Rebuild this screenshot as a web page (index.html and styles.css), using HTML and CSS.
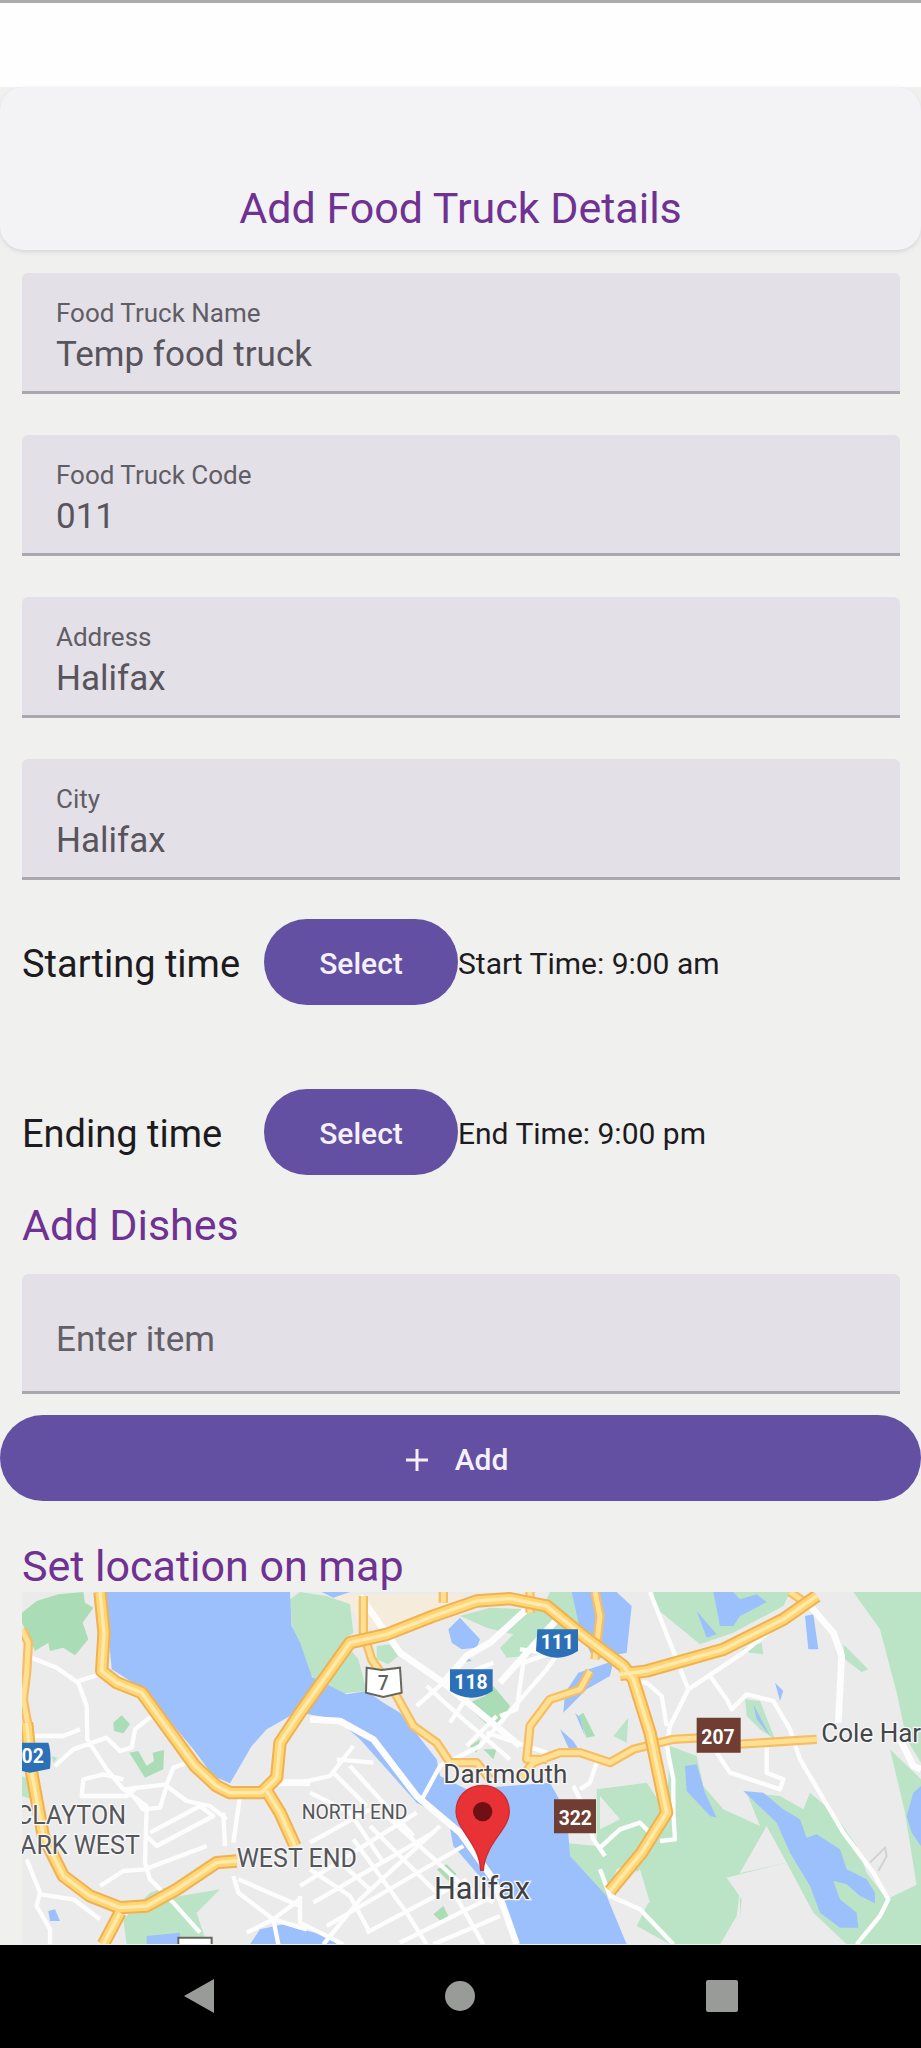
FILE: index.html
```html
<!DOCTYPE html>
<html lang="en">
<head>
<meta charset="utf-8">
<meta name="viewport" content="width=device-width, initial-scale=1">
<title>Add Food Truck Details</title>
<link rel="stylesheet" href="styles.css">
</head>
<body>
<div class="status-bar"></div>
<header class="title-card"><h1 class="title">Add Food Truck Details</h1></header>
<main>
<form class="form">
  <div class="fields">
    <label class="field"><span class="field-label">Food Truck Name</span><input class="field-input" type="text" value="Temp food truck"></label>
    <label class="field"><span class="field-label">Food Truck Code</span><input class="field-input" type="text" value="011"></label>
    <label class="field"><span class="field-label">Address</span><input class="field-input" type="text" value="Halifax"></label>
    <label class="field"><span class="field-label">City</span><input class="field-input" type="text" value="Halifax"></label>
  </div>
  <div class="times">
    <div class="time-row"><span class="time-label">Starting time</span><button class="button" type="button">Select</button><span class="time-value">Start Time: 9:00 am</span></div>
    <div class="time-row"><span class="time-label">Ending time</span><button class="button" type="button">Select</button><span class="time-value">End Time: 9:00 pm</span></div>
  </div>
  <h2 class="section-title">Add Dishes</h2>
  <div class="field field-single"><input class="field-input" type="text" placeholder="Enter item" aria-label="Enter item"></div>
  <button class="button button-wide" type="button">
    <svg class="plus" viewBox="0 0 24 24" aria-hidden="true"><path d="M12 1v22M1 12h22" stroke="currentColor" stroke-width="3"/></svg>
    Add
  </button>
  <h2 class="section-title map-title">Set location on map</h2>
</form>
<svg class="map" viewBox="66 38 2697 1057" preserveAspectRatio="xMinYMin slice" role="img" aria-label="Map of Halifax">
  <rect class="land" x="66" y="38" width="2697" height="1057"/>
  <path class="sand" d="M980 45L1400 45 1300 100 1160 150 1080 140 1050 75z"/>
  <!-- parks -->
  <g class="park">
    <path class="park-deep" d="M66 100L110 65 175 45 250 38 255 70 280 85 248 130 265 180 225 228 190 205 150 215 145 190 105 215 66 130z"/>
    <path class="park-deep" d="M340 430L365 408 390 435 370 462 342 455zM388 520L415 515 440 560 462 545 458 520 492 512 490 570 435 595z"/>
    <path d="M66 590L85 600 95 660 66 650zM155 530L172 535 160 552z"/>
    <path d="M380 1095L370 1020 450 940 490 925 510 955 660 930 590 1000 610 1060 620 1095z"/>
    <path d="M870 60L900 38 980 50 1050 75 1060 160 1030 185 1075 240 1100 335 1000 345 925 280 880 170z"/>
    <path d="M1130 200L1170 195 1195 230 1165 255 1130 240zM1380 110L1470 85 1580 90 1640 60 1650 38 1715 38 1745 150 1610 190 1590 230 1520 235 1500 205 1540 165 1460 145z"/>
    <path class="park-deep" d="M1395 375L1455 350 1480 320 1530 380 1500 435 1460 435zM1410 500L1440 480 1430 520zM1450 510L1490 510 1480 540z"/>
    <path d="M1960 38L2370 38 2350 80 2200 160 2100 195 1960 80zM2225 210L2285 190 2290 225 2250 220zM2530 195L2605 270 2585 278 2535 240zM2560 38H2763V550L2720 480 2690 340 2640 150zM1840 470L1885 415 1880 490zM2235 360L2280 365 2325 480 2280 450 2240 410z"/>
    <path class="park-deep" d="M1735 410L1750 400 1785 470 1760 475zM1310 870L1340 855 1370 885 1345 905zM1300 1005L1330 980 1345 1010 1325 1028z"/>
    <path d="M1790 630L1940 610 2000 700 2010 500 2090 530 2110 620 2170 690 2280 740 2240 640 2340 650 2410 690 2430 640 2500 700 2570 800 2600 880 2660 960 2763 910V1095H2160L2220 1010 2220 930 2180 890 2360 850 2300 740 2220 880 2000 980 1940 960 1900 850 1850 870 1820 960 1700 830 1690 790 1790 800z"/>
    <path d="M2670 510L2763 600V1000L2715 700zM1980 900L2180 880 2220 930 2210 1010 2160 1095 2010 1095 1910 1040z"/>
  </g>
  <path class="land" d="M2360 850L2180 895 2225 960 2220 1010 2160 1095H2540L2440 1000zM1800 650L1860 720 1800 750zM1920 870L1950 970 1840 950z"/>
  <!-- water -->
  <g class="water">
    <path d="M310 38H870L875 140 900 190 935 290 930 350 870 410 800 450 755 500 690 612 640 590 580 510 430 330 335 270 325 160z"/>
    <path d="M900 190L930 290 1040 345 1100 335 1150 370 1200 400 1310 540 1320 590 1400 630 1650 610 1700 700 1710 830 1820 950 1880 1095H1555L1490 950 1360 800 1345 720 1250 670 1080 480 1010 420 900 400z"/>
    <path d="M965 38L1050 38 1000 55zM1345 150L1380 115 1440 180 1430 205 1385 210 1355 190zM1380 250L1400 230 1415 245zM1715 38H1850L1895 80 1880 220 1780 240 1740 150zM1690 400L1695 340 1735 280 1840 245 1830 290 1760 330zM1820 100L1858 130 1840 155 1820 155z"/>
    <path d="M1725 400L1740 415 1755 470zM1680 450L1720 485 1745 525 1710 515zM2140 38L2200 38 2220 60 2270 45 2300 68 2260 90 2220 110 2200 140 2160 140zM2090 95L2150 165 2120 175zM2415 110L2440 105 2455 210 2425 210zM2325 310L2350 335 2340 365zM2260 375L2310 470 2270 420zM2055 560L2090 555 2115 640 2150 715 2130 710 2060 635z"/>
    <path d="M2230 635L2290 640 2350 690 2400 720 2420 775 2450 765 2520 810 2540 870 2600 900 2625 940 2625 972 2580 950 2540 915 2500 905 2520 960 2570 1000 2575 1045 2520 1045 2460 1000 2430 920 2370 820 2330 730zM2763 620L2740 640 2720 710 2735 760 2763 800zM440 1070L540 1060 540 1095H440zM145 995L165 990 180 1025 150 1025zM780 1050L850 1035 930 1060 1000 1095H750zM900 1050L990 1070 1010 1095H900z"/>
  </g>
  <!-- streets -->
  <g class="street">
    <path d="M95 235L170 265 235 310 260 380 262 480 320 570 370 630 440 680 435 850 450 900 520 970 600 1060M235 305L300 285M80 470L190 470 240 450M165 560L220 510 320 475 360 515 395 505 405 450 455 410M370 630L500 615 520 565 560 550 610 580M370 600L310 585 250 600 245 650 380 650 410 625M400 650L430 690 480 685 500 620 560 665 630 680 680 720M670 700L675 800M720 650L700 790M450 760L600 680 640 710 470 800 440 770M300 920L370 875 435 870 620 800M80 840L120 940 110 980 150 1050 150 1095M120 945L220 960 300 1020M700 890L715 940 820 1020 900 960M715 900L900 980M820 1020L740 1060M820 1020L835 1095M820 1020L920 1050"/>
    <path class="street-wide" d="M835 610L930 610M930 420L1020 425 1120 480 1250 650 1380 760 1480 900 1520 1010 1550 1095M1080 50L1200 220 1330 310 1500 450 1560 500M1580 90L1470 190 1400 230 1330 310M1680 110L1500 310"/>
    <path d="M1260 670L1320 560 1440 500 1640 270 1690 200M1320 740L1080 960 970 1095M1280 320L1390 420 1530 540M1250 380L1330 310 1480 250M1350 430L1410 340M1400 500L1490 410M1460 460L1640 520M1500 410L1550 390 1570 250 1700 205M1560 210L1640 220 1700 200M900 610L990 590 1060 500M1010 540L1120 550M930 640L1050 700 1150 850M1000 580L1100 680M1050 560L1240 770M930 790L1110 690M900 920L1250 700M940 970L1300 760M980 1040L1390 800M930 870L1050 950 1110 1060M1000 830L1110 930M1060 780L1220 1000 1280 1095M1110 740L1320 950M1150 700L1390 920 1480 970M1100 1060L1400 900M1200 1090L1460 960M1300 1095L1500 1010M1350 920L1450 1095M900 950L900 1030 1030 1095"/>
    <path d="M1950 38L2010 190 2065 330M2360 115L2230 220 2065 330 2010 440 2000 500 2020 600 2020 700 2025 780 1980 785M1880 310L1940 310 1985 350 2000 440M2130 290L2180 360 2195 390 2240 345 2320 365 2370 450 2400 540 2530 760 2620 880 2665 960 2640 1010 2570 1095M2150 520L2190 580 2250 600 2340 630 2350 600 2300 580 2300 490M1800 805L1860 750 1920 730 1950 760M1720 620L1750 680 1780 780 1815 830M1800 870L1830 950 1920 990 2020 1095M1740 630L1770 610 1790 550"/>
    <path class="street-wide" d="M2430 80L2500 160 2525 230 2515 430M2700 480L2740 560 2763 570"/>
  </g>
  <path class="trail" d="M2610 850L2655 805 2660 830 2635 875"/>
  <!-- highways: casing first, then fill -->
  <defs>
    <g id="main-roads">
      <path d="M300 38L312 160 305 275 350 310 425 340 585 560 650 620 690 640 785 640 830 595 840 490 900 400 1050 190 1160 165 1300 110 1430 65 1530 58 1640 80 1750 170 1870 260 1900 300 1950 460 2000 700 1925 820 1830 935"/>
      <path d="M80 430L95 580 130 770 190 890 270 950 360 985 440 980 530 930 650 850 710 845M800 635L840 700 885 800M360 1000L310 1095"/>
      <path d="M1860 285L1940 275 2170 210 2350 120 2450 50"/>
    </g>
    <g id="minor-roads">
      <path d="M66 150L85 190 80 280 70 360 88 460M1090 50L1090 160 1115 240 1190 350 1240 440 1310 490 1350 550 1430 550 1470 600M1560 600L1600 550 1680 520 1740 520 1830 550 1900 510 2020 480 2110 475M1330 38L1330 70M1590 38L1590 100M1785 38L1800 110 1785 240M1770 275L1740 330 1650 360 1590 440 1580 540 1640 540M2210 495L2450 480M2370 38L2430 80"/>
    </g>
  </defs>
  <use class="minor-case" href="#minor-roads"/><use class="minor-fill" href="#minor-roads"/>
  <use class="main-case" href="#main-roads"/><use class="main-fill" href="#main-roads"/><use class="main-line" href="#main-roads"/>
  <!-- route shields -->
  <g class="shield-blue">
    <path d="M30 490H145Q155 520 150 568L90 580 30 568z"/>
    <path d="M1350 270H1478V335Q1415 375 1350 335z"/>
    <path d="M1612 150H1734V215Q1672 255 1608 215z"/>
  </g>
  <path class="shield-white" d="M1100 265L1145 272 1200 265 1205 340 1150 353 1098 340z"/>
  <path class="shield-white" d="M535 1075H635V1110H535z"/>
  <path class="shield-brown" d="M2090 415H2222V520H2090zM1662 660H1788V762H1662z"/>
  <g class="shield-text">
    <text x="98" y="552">02</text><text x="1413" y="330">118</text><text x="1672" y="210">111</text>
    <text x="2154" y="493">207</text><text x="1726" y="738">322</text>
    <text class="shield-dark" x="1150" y="331">7</text>
  </g>
  <!-- place names -->
  <g class="place">
    <text x="48" y="733">CLAYTON</text><text x="18" y="825">PARK WEST</text><text x="710" y="864">WEST END</text>
    <text class="place-small" x="905" y="718">NORTH END</text>
    <text class="place-town" x="1330" y="610">Dartmouth</text>
    <text class="place-town" x="2464" y="488">Cole Harbour</text>
    <text class="place-city" x="1302" y="958">Halifax</text>
  </g>
  <!-- location pin -->
  <path class="pin" d="M1448 618C1400 618 1368 653 1368 697C1368 750 1438 790 1442 873H1450C1456 790 1528 750 1528 697C1528 653 1494 618 1448 618z"/>
  <circle class="pin-dot" cx="1448" cy="697" r="29"/>
</svg>
</main>
<nav class="nav-bar" aria-label="System navigation">
  <button class="nav-button" type="button" aria-label="Back"><svg class="nav-icon" viewBox="0 0 36 36"><path d="M33 1V35L3 18z"/></svg></button>
  <button class="nav-button" type="button" aria-label="Home"><svg class="nav-icon" viewBox="0 0 36 36"><circle cx="18" cy="18" r="15"/></svg></button>
  <button class="nav-button" type="button" aria-label="Recent apps"><svg class="nav-icon" viewBox="0 0 36 36"><rect x="2" y="2" width="32" height="32" rx="2"/></svg></button>
</nav>
</body>
</html>
```
FILE: styles.css
```css
* { box-sizing: border-box; }
body {
  margin: 0;
  min-height: 100vh;
  display: flex;
  flex-direction: column;
  background: #f0f1ef;
  color: #1d1b20;
  font-family: Roboto, "Liberation Sans", sans-serif;
}
button, input { font: inherit; }
main { flex: 1; display: flex; flex-direction: column; }

.status-bar { height: 87px; background: #fefefe; border-top: 3px solid #ababab; }
.title-card {
  padding: 97px 24px 18px;
  border-radius: 24px;
  background: #f3f3f5;
  box-shadow: 0 2px 4px #d6d6da;
  text-align: center;
}
.title, .section-title {
  margin: 0;
  color: #6f3292;
  font-size: 43px;
  font-weight: 400;
  line-height: 48px;
}
.title { font-size: 43px; }

.form { padding: 23px 0 0; }
.fields { display: grid; gap: 41px; }
.field {
  display: block;
  margin: 0 21px 0 22px;
  padding: 24px 34px 15px;
  border-bottom: 3px solid #aaa7ae;
  border-radius: 6px 6px 0 0;
  background: #e3e0e7;
}
.field-label { display: block; margin-bottom: 5px; color: #605d65; font-size: 26px; line-height: 32px; }
.field-input {
  display: block;
  width: 100%;
  height: 42px;
  padding: 0;
  border: 0;
  outline: 0;
  background: transparent;
  color: #57545b;
  font-size: 35px;
  line-height: 42px;
}
.field-input::placeholder { color: #625f66; opacity: 1; }
.field-single { padding: 45px 34px 30px; }

.times { display: grid; gap: 84px; margin: 39px 22px 26px; }
.time-row { display: flex; align-items: center; }
.time-label { width: 242px; padding-top: 4px; font-size: 38px; line-height: 44px; }
.time-value { padding-top: 4px; font-size: 30px; line-height: 36px; }
.button {
  min-width: 194px;
  height: 86px;
  padding: 3px 48px 0;
  border: 0;
  border-radius: 43px;
  background: #6450a2;
  color: #f5f0fb;
  font-size: 30px;
  font-weight: 500;
}
.button-wide {
  display: flex;
  align-items: center;
  justify-content: center;
  gap: 26px;
  width: 100%;
  margin-top: 21px;
  padding-right: 56px;
}
.plus { width: 24px; height: 24px; }
.section-title { margin: 0 22px 25px; }
.map-title { margin: 41px 22px 2px; }

.map { display: block; width: calc(100% - 22px); margin-left: 22px; }
.land { fill: #ebebec; }
.sand { fill: #f5ecdc; }
.park { fill: #bbe4c6; }
.park-deep { fill: #aadcb5; }
.water { fill: #9cc0fc; }
.street { fill: none; stroke: #fdfdfd; stroke-width: 13; stroke-linejoin: round; }
.street-wide { stroke-width: 20; }
.trail { fill: none; stroke: #d2d2d2; stroke-width: 6; }
.minor-case, .minor-fill, .main-case, .main-fill, .main-line { fill: none; stroke-linejoin: round; }
.minor-case { stroke: #f6bd62; stroke-width: 28; }
.minor-fill { stroke: #ffe093; stroke-width: 15; }
.main-case { stroke: #f2b04e; stroke-width: 40; }
.main-fill { stroke: #ffd674; stroke-width: 28; }
.main-line { stroke: #ffe9ac; stroke-width: 10; }
.shield-blue { fill: #2c70b7; }
.shield-white { fill: #fff; stroke: #68665f; stroke-width: 6; }
.shield-brown { fill: #6f3d31; }
.shield-text { fill: #fff; font-size: 58px; font-weight: 700; text-anchor: middle; }
.shield-dark { fill: #5f5f5f; font-weight: 500; }
.place { fill: #55565a; stroke: #f7f7f7; stroke-width: 8; paint-order: stroke; font-size: 75px; }
.place-small { font-size: 58px; }
.place-town { fill: #45464a; font-size: 78px; }
.place-city { fill: #3f4044; font-size: 92px; }
.pin { fill: #e93235; stroke: #cf2e30; stroke-width: 4; }
.pin-dot { fill: #6e1014; }

.nav-bar {
  display: flex;
  align-items: center;
  justify-content: space-around;
  height: 103px;
  padding: 0 68px 2px;
  background: #000;
}
.nav-button { display: flex; padding: 0; border: 0; background: none; }
.nav-icon { width: 36px; height: 36px; fill: #999b98; }
```
